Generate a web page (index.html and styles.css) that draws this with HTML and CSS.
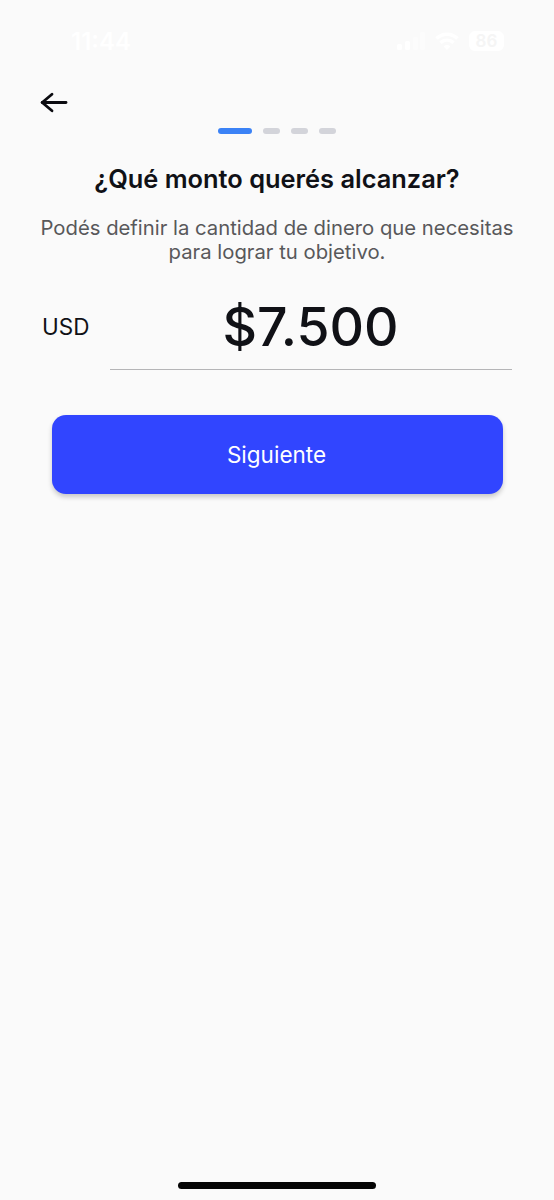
FILE: index.html
```html
<!DOCTYPE html>
<html lang="es">
<head>
    <meta charset="UTF-8">
    <meta name="viewport" content="width=device-width, initial-scale=1.0">
    <title>Objetivo de ahorro</title>
    <link rel="stylesheet" href="styles.css">
</head>
<body>
    <div class="screen">
        <!-- Status bar -->
        <div class="status-bar">
            <span class="status-time">11:44</span>
            <div class="status-icons">
                <svg class="signal" width="28" height="18" viewBox="0 0 28 18" fill="#fff">
                    <rect x="0" y="12" width="5" height="6" rx="1.5"/>
                    <rect x="8" y="9" width="5" height="9" rx="1.5"/>
                    <rect x="16" y="5" width="5" height="13" rx="1.5" opacity="0.4"/>
                    <rect x="23" y="0" width="5" height="18" rx="1.5" opacity="0.4"/>
                </svg>
                <svg class="wifi" width="24" height="18" viewBox="0 0 24 18" fill="none" stroke="#fff" stroke-width="3.4">
                    <path d="M1.5 6.5a15 15 0 0 1 21 0"/>
                    <path d="M5.5 10.8a9.3 9.3 0 0 1 13 0"/>
                    <path d="M12 18l-3.4-3.6a5 5 0 0 1 6.8 0z" fill="#fff" stroke="none"/>
                </svg>
                <div class="battery"><span class="battery-level">86</span></div>
            </div>
        </div>

        <div class="top-nav">
            <button class="back-btn" aria-label="Volver">
                <svg width="28" height="22" viewBox="0 0 28 22" fill="none" stroke="#0b0b10" stroke-width="2.8" stroke-linecap="round" stroke-linejoin="round">
                    <path d="M26 11.5H2.2"/>
                    <path d="M12 3.2L2.2 11.5l9.8 8.3"/>
                </svg>
            </button>
        </div>

        <!-- Progress steps -->
        <div class="steps">
            <span class="step active"></span>
            <span class="step"></span>
            <span class="step"></span>
            <span class="step"></span>
        </div>

        <h1 class="title">¿Qué monto querés alcanzar?</h1>
        <p class="subtitle">Podés definir la cantidad de dinero que necesitas<br>para lograr tu objetivo.</p>

        <div class="amount-row">
            <span class="currency">USD</span>
            <div class="amount">$7.500</div>
        </div>

        <button class="next-btn">Siguiente</button>

        <div class="home-indicator"></div>
    </div>
</body>
</html>
```

FILE: styles.css
```css
* {
    box-sizing: border-box;
}

body {
    margin: 0;
    background-color: #fafafa;
    font-family: Inter, "Liberation Sans", sans-serif;
    color: #101116;
}

button {
    border: none;
    padding: 0;
    font-family: inherit;
    cursor: pointer;
}

.screen {
    height: 1200px;
    display: flex;
    flex-direction: column;
    overflow: hidden;
}

/* Status bar */
.status-bar {
    height: 82px;
    padding: 0 50px 0 71px;
    display: flex;
    justify-content: space-between;
    align-items: center;
    color: #fff;
}

.status-time {
    font-size: 24px;
    font-weight: 600;
}

.status-icons {
    display: flex;
    align-items: center;
    gap: 10px;
}

.battery {
    width: 35px;
    height: 20px;
    border-radius: 6px;
    background-color: #fff;
    display: flex;
    justify-content: center;
    align-items: center;
}

.battery-level {
    color: #f5f5f5;
    font-size: 17px;
    font-weight: 600;
}

/* Navigation */
.top-nav {
    height: 46px;
    padding: 9px 40px 0;
}

.back-btn {
    display: block;
    height: 22px;
    background: none;
}

.back-btn svg {
    display: block;
}

.steps {
    display: flex;
    justify-content: center;
    gap: 11px;
}

.step {
    width: 17px;
    height: 6px;
    border-radius: 3px;
    background-color: #d3d4da;
}

.step.active {
    width: 34px;
    background-color: #3b82f6;
}

/* Content */
.title {
    margin: 29px 0 0;
    font-size: 25.4px;
    font-weight: 600;
    line-height: 32px;
    text-align: center;
}

.subtitle {
    margin: 21px 0 0;
    color: #58585a;
    font-size: 20.3px;
    line-height: 24px;
    text-align: center;
}

.amount-row {
    height: 86px;
    margin: 20px 42px 0;
    display: flex;
    align-items: center;
    gap: 20px;
}

.currency {
    width: 48px;
    padding-bottom: 2px;
    font-size: 22.5px;
}

.amount {
    flex: 1;
    height: 86px;
    padding-right: 1px;
    border-bottom: 1px solid #b5b5b7;
    font-size: 53.5px;
    font-weight: 500;
    line-height: 86px;
    text-align: center;
}

.next-btn {
    height: 79px;
    margin: 45px 51px 0 52px;
    padding-right: 2px;
    border-radius: 14px;
    background-color: #3145ff;
    box-shadow: 0 3px 5px rgba(0, 0, 0, 0.2);
    color: #fff;
    font-size: 22.5px;
}

.home-indicator {
    width: 198px;
    height: 7px;
    margin: auto auto 11px;
    border-radius: 4px;
    background-color: #050505;
}
```
